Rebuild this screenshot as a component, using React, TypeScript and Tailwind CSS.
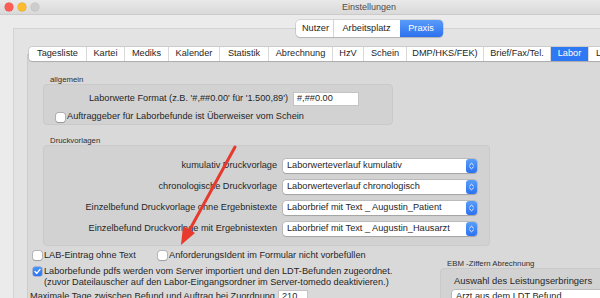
import React from "react";

const tabs: { label: string; w: string; active?: boolean }[] = [
  { label: "Tagesliste", w: "w-[57px]" },
  { label: "Kartei", w: "w-[38px]" },
  { label: "Mediks", w: "w-[44px]" },
  { label: "Kalender", w: "w-[51px]" },
  { label: "Statistik", w: "w-[49px]" },
  { label: "Abrechnung", w: "w-[64px]" },
  { label: "HzV", w: "w-[31px]" },
  { label: "Schein", w: "w-[43px]" },
  { label: "DMP/HKS/FEK)", w: "w-[77px]" },
  { label: "Brief/Fax/Tel.", w: "w-[67px]" },
  { label: "Labor", w: "w-[38px]", active: true },
  { label: "Leistungen", w: "w-[60px]" },
];

function Checkbox({ checked }: { checked?: boolean }) {
  if (checked) {
    return (
      <span className="flex h-[9px] w-[9px] shrink-0 items-center justify-center rounded-[2px] bg-gradient-to-b from-[#4a94f9] to-[#2b73f1] shadow-[0_0_0_0.5px_rgba(20,80,200,0.5)]">
        <svg width="9" height="9" viewBox="0 0 9 9">
          <path d="M2 4.6 L3.8 6.4 L7 2.4" fill="none" stroke="white" strokeWidth="1.4" strokeLinecap="round" strokeLinejoin="round" />
        </svg>
      </span>
    );
  }
  return (
    <span className="h-[9px] w-[9px] shrink-0 rounded-[2px] bg-white shadow-[0_0_0_0.5px_rgba(0,0,0,0.3),0_0.5px_1px_rgba(0,0,0,0.15)]" />
  );
}

function Select({ text, w }: { text: string; w: string }) {
  return (
    <div className={`flex h-[14px] ${w} shrink-0 items-center rounded-[3px] bg-white pl-[4px] shadow-[0_0_0_0.5px_rgba(0,0,0,0.22),0_1px_1px_rgba(0,0,0,0.12)]`}>
      <span className="whitespace-nowrap">{text}</span>
      <span className="ml-auto flex h-[14px] w-[11px] items-center justify-center rounded-[3px] bg-gradient-to-b from-[#5a9ef9] to-[#2b70f0]">
        <svg width="7" height="10" viewBox="0 0 7 10">
          <path d="M1.6 4 L3.5 2.2 L5.4 4" fill="none" stroke="white" strokeWidth="0.9" strokeLinecap="round" strokeLinejoin="round" />
          <path d="M1.6 6 L3.5 7.8 L5.4 6" fill="none" stroke="white" strokeWidth="0.9" strokeLinecap="round" strokeLinejoin="round" />
        </svg>
      </span>
    </div>
  );
}

const druckRows = [
  ["kumulativ Druckvorlage", "Laborwerteverlauf kumulativ"],
  ["chronologische Druckvorlage", "Laborwerteverlauf chronologisch"],
  ["Einzelbefund Druckvorlage ohne Ergebnistexte", "Laborbrief mit Text _ Augustin_Patient"],
  ["Einzelbefund Druckvorlage mit Ergebnistexten", "Laborbrief mit Text _ Augustin_Hausarzt"],
];

export default function App() {
  return (
    <div className="relative h-[298px] w-[600px] overflow-hidden bg-[#ebebeb] font-['Liberation_Sans',Arial,sans-serif] text-[9.2px] leading-none text-[#262626]">
      <div className="w-[738px]">
        {/* Title bar */}
        <div className="flex h-[15px] items-center border-b border-[#cbcbcb] bg-gradient-to-b from-[#e9e9e9] to-[#d9d9d9]">
          <div className="flex w-[60px] gap-[5px] pl-[5px]">
            <span className="h-[8px] w-[8px] rounded-full bg-[#fd5f57] shadow-[0_0_0_0.5px_#e2463f]" />
            <span className="h-[8px] w-[8px] rounded-full bg-[#fdbc2e] shadow-[0_0_0_0.5px_#dea123]" />
            <span className="h-[8px] w-[8px] rounded-full bg-[#cdcdcd] shadow-[0_0_0_0.5px_#bdbdbd]" />
          </div>
          <div className="flex-1 text-center text-[9px] text-[#4d4d4d]">Einstellungen</div>
          <div className="w-[60px]" />
        </div>

        <div className="pt-[5px]">
          {/* Top segmented control */}
          <div className="relative z-10 flex justify-center">
            <div className="flex h-[17px] rounded-[4px] bg-white shadow-[0_0_0_0.5px_rgba(0,0,0,0.2),0_1px_1px_rgba(0,0,0,0.12)]">
              <div className="flex w-[37px] items-center justify-center pl-[3px]">Nutzer</div>
              <div className="flex w-[67px] items-center justify-center border-l border-[#d5d5d5]">Arbeitsplatz</div>
              <div className="flex w-[43px] items-center justify-center rounded-r-[4px] bg-gradient-to-b from-[#5a9bf8] to-[#2c70ef] text-white">Praxis</div>
            </div>
          </div>

          {/* Outer box */}
          <div className="-mt-[9px] ml-[13px] h-[300px] border border-[#d3d3d3] bg-[#e3e3e3] pt-[18px]">
            {/* Inner tab strip */}
            <div className="relative z-10 ml-[15px] flex h-[14px] w-max rounded-[3px] bg-white shadow-[0_0_0_0.5px_rgba(0,0,0,0.2),0_1px_1px_rgba(0,0,0,0.12)]">
              {tabs.map((t, i) => (
                <div
                  key={t.label}
                  className={`flex ${t.w} items-center justify-center whitespace-nowrap ${i > 0 ? "border-l border-[#d8d8d8]" : ""} ${t.active ? "bg-[#2f78f4] text-white" : ""}`}
                >
                  {t.label}
                </div>
              ))}
            </div>

            {/* Inner box */}
            <div className="-mt-[7px] ml-[13px] h-[300px] border border-[#cbcbcb] bg-[#d9d9d9] pl-[5px] pt-[20px]">
              {/* allgemein */}
              <div className="ml-[17px] h-[9px] text-[7.8px] leading-[9px] text-[#2e2e2e]">allgemein</div>
              <div className="ml-[10px] w-[350px] rounded-[4px] border border-[#cacaca] bg-[#d2d2d2] pb-[1px] pt-[7px]">
                <div className="flex h-[14px] items-center">
                  <div className="w-[244px] whitespace-nowrap text-right">Laborwerte Format (z.B. '#,##0.00' für '1.500,89')</div>
                  <div className="ml-[5px] flex h-[14px] w-[66px] items-center border border-[#c4c4c4] bg-white pl-[3px]">#,##0.00</div>
                </div>
                <div className="mt-[5px] flex h-[12px] items-center pl-[12px]">
                  <Checkbox />
                  <span className="ml-[2px] whitespace-nowrap">Auftraggeber für Laborbefunde ist Überweiser vom Schein</span>
                </div>
              </div>

              {/* Druckvorlagen */}
              <div className="ml-[17px] mt-[11px] h-[9px] text-[7.8px] leading-[9px] text-[#2e2e2e]">Druckvorlagen</div>
              <div className="ml-[10px] flex w-[447px] flex-col gap-[7px] rounded-[4px] border border-[#cacaca] bg-[#d2d2d2] pb-[9px] pt-[13px]">
                {druckRows.map(([label, value]) => (
                  <div key={label} className="flex h-[14px] items-center">
                    <div className="w-[233px] whitespace-nowrap text-right">{label}</div>
                    <div className="ml-[6px]">
                      <Select text={value} w="w-[194px]" />
                    </div>
                  </div>
                ))}
              </div>

              {/* Bottom section */}
              <div className="mt-[5px] flex">
                <div className="w-[407px] shrink-0">
                  <div className="flex h-[10px] items-center">
                    <div className="flex w-[125px] items-center">
                      <Checkbox />
                      <span className="ml-[2px] whitespace-nowrap">LAB-Eintrag ohne Text</span>
                    </div>
                    <div className="flex items-center">
                      <Checkbox />
                      <span className="ml-[2px] whitespace-nowrap">AnforderungsIdent im Formular nicht vorbefüllen</span>
                    </div>
                  </div>
                  <div className="mt-[5px] flex items-start">
                    <span className="mt-[0.5px]">
                      <Checkbox checked />
                    </span>
                    <div className="ml-[2px] whitespace-nowrap leading-[11px]">
                      <div>Laborbefunde pdfs werden vom Server importiert und den LDT-Befunden zugeordnet.</div>
                      <div>(zuvor Dateilauscher auf den Labor-Eingangsordner im Server-tomedo deaktivieren.)</div>
                    </div>
                  </div>
                  <div className="-ml-[3px] mt-[2px] flex h-[14px] items-center">
                    <span className="w-[248px] whitespace-nowrap">Maximale Tage zwischen Befund und Auftrag bei Zuordnung</span>
                    <div className="flex h-[14px] w-[30px] items-center border border-[#c4c4c4] bg-white pl-[3px]">210</div>
                  </div>
                </div>

                <div className="shrink-0">
                  <div className="ml-[7px] mt-[8px] h-[9px] whitespace-nowrap text-[7.8px] leading-[9px] text-[#2e2e2e]">EBM -Ziffern Abrechnung</div>
                  <div className="w-[280px] rounded-[4px] border border-[#cacaca] bg-[#d2d2d2] pt-[7px]">
                    <div className="ml-[13px] h-[10px] whitespace-nowrap text-[9.4px] leading-[10px]">Auswahl des Leistungserbringers</div>
                    <div className="ml-[11px] mt-[4px]">
                      <Select text="Arzt aus dem LDT Befund" w="w-[195px]" />
                    </div>
                    <div className="h-[20px]" />
                  </div>
                </div>
              </div>
            </div>
          </div>
        </div>
      </div>

      {/* Red annotation arrow */}
      <svg className="pointer-events-none absolute left-0 top-0" width="600" height="298" viewBox="0 0 600 298">
        <line x1="235" y1="147" x2="189" y2="231" stroke="#e8392d" strokeWidth="3" strokeLinecap="round" />
        <polygon points="181,245 183,226 195,233" fill="#e8392d" />
      </svg>
    </div>
  );
}
